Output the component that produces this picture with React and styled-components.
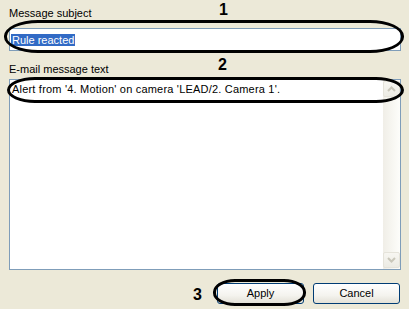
import React from "react";
import styled, { createGlobalStyle } from "styled-components";

const GlobalStyle = createGlobalStyle`
  html, body {
    margin: 0;
    padding: 0;
    background: #ece9d8;
  }
  body {
    font-family: "Liberation Sans", Arial, sans-serif;
  }
`;

const Page = styled.div`
  width: 409px;
  height: 309px;
  box-sizing: border-box;
  padding: 7px 8px 0 9px;
  background: #ece9d8;
  display: flex;
  flex-direction: column;
  position: relative;
  overflow: hidden;
`;

const Field = styled.div`
  position: relative;
  display: flex;
  flex-direction: column;
  margin-top: ${(p) => p.$top || 0}px;
`;

const Label = styled.div`
  font-size: 11px;
  line-height: 13px;
  height: 13px;
  color: #000;
  margin-bottom: ${(p) => p.$gap}px;
  white-space: nowrap;
`;

const TextBox = styled.div`
  height: 23px;
  box-sizing: border-box;
  border: 1px solid #7f9db9;
  background: #fff;
  display: flex;
  align-items: center;
  padding-left: 1px;
`;

const Selected = styled.span`
  background: #316ac5;
  color: #fff;
  font-size: 11px;
  line-height: 12px;
  padding: 0 1px;
`;

const MemoBox = styled.div`
  height: 191px;
  box-sizing: border-box;
  border: 1px solid #7f9db9;
  background: #fff;
  display: flex;
`;

const MemoText = styled.div`
  flex: 1;
  padding: 3px 2px;
  font-size: 11px;
  line-height: 13px;
  letter-spacing: 0.2px;
  color: #000;
  white-space: nowrap;
`;

const ScrollBar = styled.div`
  width: 17px;
  display: flex;
  flex-direction: column;
  justify-content: space-between;
  background: linear-gradient(to right, #f0eee7, #fdfdfa);
  padding: 1px 0;
  box-sizing: border-box;
`;

const ArrowButton = styled.div`
  width: 17px;
  height: 16px;
  box-sizing: border-box;
  border: 1px solid #e5e3da;
  border-radius: 2px;
  background: linear-gradient(to bottom, #f7f6f1, #ecebe4);
  display: flex;
  align-items: center;
  justify-content: center;
`;

const Footer = styled.div`
  margin-top: 13px;
  display: flex;
  justify-content: flex-end;
  gap: 9px;
  padding-right: 1px;
  position: relative;
`;

const Button = styled.div`
  width: 87px;
  height: 21px;
  box-sizing: border-box;
  border: 1px solid #003c74;
  border-radius: 3px;
  background: linear-gradient(to bottom, #ffffff 0%, #f4f3ee 60%, #e3e1d7 100%);
  font-size: 11px;
  line-height: 19px;
  text-align: center;
  color: #000;
`;

const Ring = styled.div`
  position: absolute;
  left: ${(p) => p.$x}px;
  top: ${(p) => p.$y}px;
  width: ${(p) => p.$w}px;
  height: ${(p) => p.$h}px;
  box-sizing: border-box;
  border: 3px solid #000;
  border-radius: ${(p) => p.$r};
  pointer-events: none;
`;

const Mark = styled.div`
  position: absolute;
  left: ${(p) => p.$x}px;
  top: ${(p) => p.$y}px;
  font-family: "Liberation Sans", Arial, sans-serif;
  font-weight: 700;
  font-size: 16px;
  line-height: 16px;
  color: #000;
`;

const Chevron = ({ up }) => (
  <svg width="9" height="6" viewBox="0 0 9 6">
    <path
      d={up ? "M1 5 L4.5 1.5 L8 5" : "M1 1 L4.5 4.5 L8 1"}
      fill="none"
      stroke="#c9c7ba"
      strokeWidth="2"
    />
  </svg>
);

export default function App() {
  return (
    <>
      <GlobalStyle />
      <Page>
        <Field>
          <Label $gap={8}>Message subject</Label>
          <TextBox>
            <Selected>Rule reacted</Selected>
          </TextBox>
          <Mark $x={210} $y={-5}>1</Mark>
          <Ring $x={-5} $y={13} $w={400} $h={33} $r="34px / 16px" />
        </Field>

        <Field $top={12}>
          <Label $gap={3}>E-mail message text</Label>
          <MemoBox>
            <MemoText>Alert from '4. Motion' on camera 'LEAD/2. Camera 1'.</MemoText>
            <ScrollBar>
              <ArrowButton>
                <Chevron up />
              </ArrowButton>
              <ArrowButton>
                <Chevron />
              </ArrowButton>
            </ScrollBar>
          </MemoBox>
          <Mark $x={209} $y={-6}>2</Mark>
          <Ring $x={-2} $y={14} $w={397} $h={26} $r="28px / 13px" />
        </Field>

        <Footer>
          <Mark $x={184} $y={4}>3</Mark>
          <Button>Apply</Button>
          <Button>Cancel</Button>
          <Ring $x={204} $y={-4} $w={93} $h={27} $r="22px / 13px" />
        </Footer>
      </Page>
    </>
  );
}
